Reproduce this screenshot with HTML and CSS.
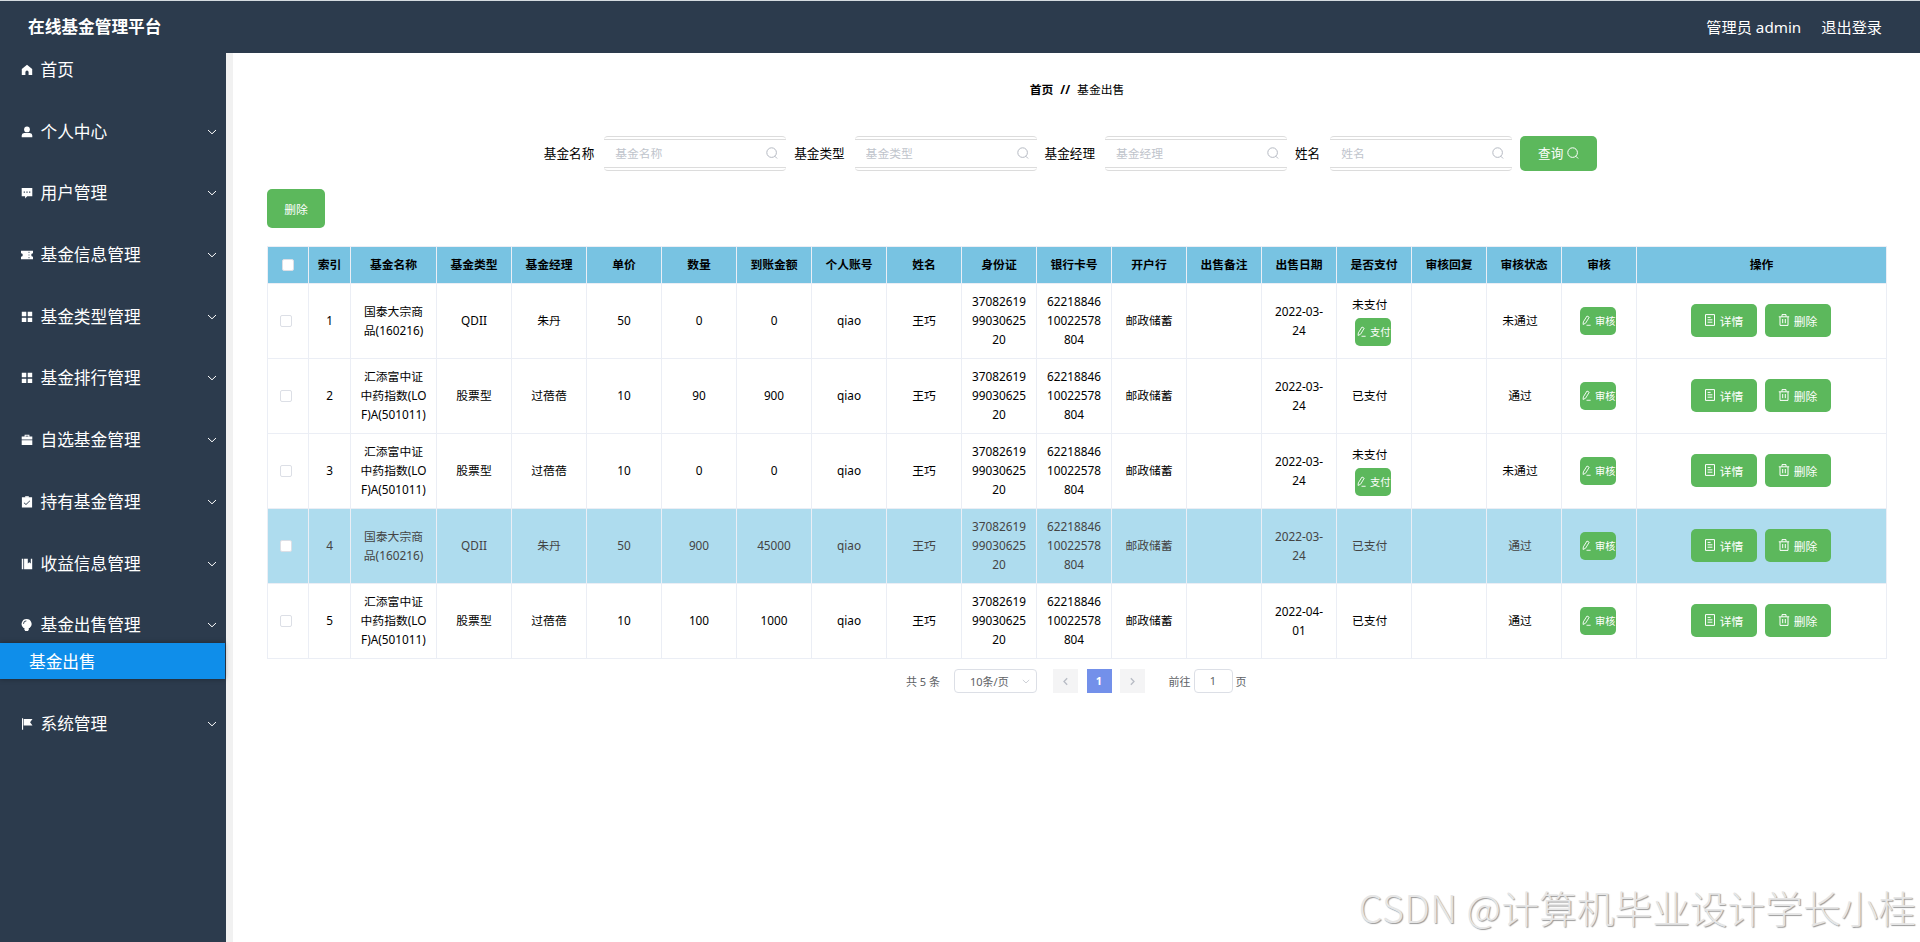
FILE: index.html
```html
<!DOCTYPE html>
<html lang="zh-CN">
<head>
    <meta charset="UTF-8">
    <meta name="viewport" content="width=device-width, initial-scale=1.0">
    <title>在线基金管理平台</title>
    <link rel="stylesheet" href="styles.css">
</head>
<body>

    <svg class="symbols">
        <symbol id="home" viewBox="0 0 12 12"><path d="M6 .8 11.2 5v6H7.6V8.2a1.6 1.6 0 0 0-3.2 0V11H.8V5z"/></symbol>
        <symbol id="user" viewBox="0 0 12 12"><circle cx="6" cy="3.4" r="2.9"/><path d="M.7 11.3V9.6A2.6 2.6 0 0 1 3.2 7h5.6a2.6 2.6 0 0 1 2.5 2.6v1.7z"/></symbol>
        <symbol id="chat" viewBox="0 0 12 12"><path fill-rule="evenodd" d="M.7 1h10.6v8.2H6.2L4.1 11.4V9.2H.7zM2.7 4.6v1.2h1.2V4.6zm2.7 0v1.2h1.2V4.6zm2.7 0v1.2h1.2V4.6z"/></symbol>
        <symbol id="ticket" viewBox="0 0 12 12"><path fill-rule="evenodd" d="M0 1.7h12v2.5a1.8 1.8 0 0 0 0 3.6v2.5H0V7.8a1.8 1.8 0 0 0 0-3.6zM7.6 2.8v1.1h.8V2.8zm0 2.6v1.2h.8V5.4zm0 2.7v1.1h.8V8.1z"/></symbol>
        <symbol id="grid" viewBox="0 0 12 12"><path d="M.8.8h4.5v4.4H.8zm5.9 0h4.5v4.4H6.7zM.8 6.7h4.5v4.4H.8zm5.9 0h4.5v4.4H6.7z"/></symbol>
        <symbol id="bag" viewBox="0 0 12 12"><path fill-rule="evenodd" d="M3.6 2.6V.8h4.8v1.8h2.9v2.9H.7V2.6zm1-.9v.9h2.8v-.9zM.7 6.3h10.6v4.6H.7z"/></symbol>
        <symbol id="claim" viewBox="0 0 12 12"><path fill-rule="evenodd" d="M.9 1.3h10.2v10.2H.9zM3.2 6.4l-.5.5 2.3 2.2 4.1-4-.4-.5L5 8.1z"/><path d="M4.2.2h3.6v1.6H4.2z"/></symbol>
        <symbol id="manage" viewBox="0 0 12 12"><path d="M.8.8h1.5v10.4H.8zm2.3 0h3.7v4.7l1.5-1.2 1.5 1.2V.8h1.4v10.4H3.1z"/></symbol>
        <symbol id="bulb" viewBox="0 0 12 12"><path fill-rule="evenodd" d="M5.6 0a5 5 0 0 1 3 9H2.6a5 5 0 0 1 3-9zM2.3 4.9h.7a2.7 2.7 0 0 1 2.4-2.7v-.7a3.3 3.3 0 0 0-3.1 3.4z"/><path d="M3.4 9h4.4v1.6L7 11.9H4.2l-.8-1.3z"/></symbol>
        <symbol id="flag" viewBox="0 0 12 12"><path d="M1 .3h1.1v11.5H1zM2.7 1h8.8L9.1 4.2l2.4 3.3H2.7z"/></symbol>
        <symbol id="down" viewBox="0 0 10 6"><path class="line" d="m1 1 4 3.8L9 1"/></symbol>
        <symbol id="left" viewBox="0 0 6 10"><path class="line bold" d="M5 1 1.2 5 5 9"/></symbol>
        <symbol id="right" viewBox="0 0 6 10"><path class="line bold" d="m1 1 3.8 4L1 9"/></symbol>
        <symbol id="search" viewBox="0 0 12 12"><circle class="line" cx="5.6" cy="5.6" r="4.8"/><path class="line" d="m8.8 9.2 2.3 2.3"/></symbol>
        <symbol id="edit" viewBox="0 0 10 12"><path class="line" d="M5.6 1 8 2.4 4 9 1.2 10.4 1.5 7.5zM5 11.3h4.6"/></symbol>
        <symbol id="doc" viewBox="0 0 12 12"><path class="line" d="M1.5 .6h9v10.8h-9zM3.6 3.4h3M3.6 5.8h4.8M3.6 8.2h4.8"/></symbol>
        <symbol id="trash" viewBox="0 0 12 12"><path class="line" d="M.8 2.8h10.4M4 2.6V.6h4v2M2 3v8.4h8V3M4.7 5v4.2M7.3 5v4.2"/></symbol>
    </svg>

    <header class="navbar">
        <div class="title">在线基金管理平台</div>
        <div class="right-menu">
            <span>管理员 admin</span>
            <span>退出登录</span>
        </div>
    </header>

    <div class="container">
        <aside class="sidebar">
            <ul class="menu">
                <li><div class="menu-title"><svg><use href="#home"/></svg><span>首页</span></div></li>
                <li><div class="menu-title"><svg><use href="#user"/></svg><span>个人中心</span><svg class="arrow"><use href="#down"/></svg></div></li>
                <li><div class="menu-title"><svg><use href="#chat"/></svg><span>用户管理</span><svg class="arrow"><use href="#down"/></svg></div></li>
                <li><div class="menu-title"><svg><use href="#ticket"/></svg><span>基金信息管理</span><svg class="arrow"><use href="#down"/></svg></div></li>
                <li><div class="menu-title"><svg><use href="#grid"/></svg><span>基金类型管理</span><svg class="arrow"><use href="#down"/></svg></div></li>
                <li><div class="menu-title"><svg><use href="#grid"/></svg><span>基金排行管理</span><svg class="arrow"><use href="#down"/></svg></div></li>
                <li><div class="menu-title"><svg><use href="#bag"/></svg><span>自选基金管理</span><svg class="arrow"><use href="#down"/></svg></div></li>
                <li><div class="menu-title"><svg><use href="#claim"/></svg><span>持有基金管理</span><svg class="arrow"><use href="#down"/></svg></div></li>
                <li><div class="menu-title"><svg><use href="#manage"/></svg><span>收益信息管理</span><svg class="arrow"><use href="#down"/></svg></div></li>
                <li>
                    <div class="menu-title"><svg><use href="#bulb"/></svg><span>基金出售管理</span><svg class="arrow"><use href="#down"/></svg></div>
                    <div class="submenu">基金出售</div>
                </li>
                <li><div class="menu-title"><svg><use href="#flag"/></svg><span>系统管理</span><svg class="arrow"><use href="#down"/></svg></div></li>
            </ul>
        </aside>

        <main class="main">
            <div class="breadcrumb"><b>首页</b><b>//</b><span>基金出售</span></div>

            <form class="search-form">
                <label>基金名称</label>
                <div class="field"><input type="text" placeholder="基金名称"><svg><use href="#search"/></svg></div>
                <label>基金类型</label>
                <div class="field"><input type="text" placeholder="基金类型"><svg><use href="#search"/></svg></div>
                <label>基金经理</label>
                <div class="field"><input type="text" placeholder="基金经理"><svg><use href="#search"/></svg></div>
                <label>姓名</label>
                <div class="field"><input type="text" placeholder="姓名"><svg><use href="#search"/></svg></div>
                <button type="button" class="btn btn-search">查询<svg><use href="#search"/></svg></button>
            </form>

            <button type="button" class="btn btn-delete">删除</button>

            <table class="table">
                <colgroup>
                    <col class="c-check"><col class="c-index"><col class="c-name">
                    <col span="16" class="c-cell">
                    <col class="c-action">
                </colgroup>
                <thead>
                    <tr>
                        <th><i class="checkbox"></i></th>
                        <th>索引</th><th>基金名称</th><th>基金类型</th><th>基金经理</th>
                        <th>单价</th><th>数量</th><th>到账金额</th><th>个人账号</th>
                        <th>姓名</th><th>身份证</th><th>银行卡号</th><th>开户行</th>
                        <th>出售备注</th><th>出售日期</th><th>是否支付</th><th>审核回复</th>
                        <th>审核状态</th><th>审核</th><th>操作</th>
                    </tr>
                </thead>
                <tbody>
                    <tr>
                        <td class="check"><i class="checkbox"></i></td>
                        <td>1</td><td>国泰大宗商<br>品(160216)</td><td>QDII</td><td>朱丹</td>
                        <td>50</td><td>0</td><td>0</td><td>qiao</td>
                        <td>王巧</td><td>37082619<br>99030625<br>20</td><td>62218846<br>10022578<br>804</td><td>邮政储蓄</td>
                        <td></td><td>2022-03-<br>24</td>
                        <td class="pay">未支付<button class="btn btn-mini"><svg><use href="#edit"/></svg>支付</button></td>
                        <td></td><td class="status">未通过</td>
                        <td class="audit"><button class="btn btn-mini"><svg><use href="#edit"/></svg>审核</button></td>
                        <td><div class="actions"><button class="btn"><svg><use href="#doc"/></svg>详情</button><button class="btn"><svg><use href="#trash"/></svg>删除</button></div></td>
                    </tr>
                    <tr>
                        <td class="check"><i class="checkbox"></i></td>
                        <td>2</td><td>汇添富中证<br>中药指数(LO<br>F)A(501011)</td><td>股票型</td><td>过蓓蓓</td>
                        <td>10</td><td>90</td><td>900</td><td>qiao</td>
                        <td>王巧</td><td>37082619<br>99030625<br>20</td><td>62218846<br>10022578<br>804</td><td>邮政储蓄</td>
                        <td></td><td>2022-03-<br>24</td>
                        <td class="pay">已支付</td>
                        <td></td><td class="status">通过</td>
                        <td class="audit"><button class="btn btn-mini"><svg><use href="#edit"/></svg>审核</button></td>
                        <td><div class="actions"><button class="btn"><svg><use href="#doc"/></svg>详情</button><button class="btn"><svg><use href="#trash"/></svg>删除</button></div></td>
                    </tr>
                    <tr>
                        <td class="check"><i class="checkbox"></i></td>
                        <td>3</td><td>汇添富中证<br>中药指数(LO<br>F)A(501011)</td><td>股票型</td><td>过蓓蓓</td>
                        <td>10</td><td>0</td><td>0</td><td>qiao</td>
                        <td>王巧</td><td>37082619<br>99030625<br>20</td><td>62218846<br>10022578<br>804</td><td>邮政储蓄</td>
                        <td></td><td>2022-03-<br>24</td>
                        <td class="pay">未支付<button class="btn btn-mini"><svg><use href="#edit"/></svg>支付</button></td>
                        <td></td><td class="status">未通过</td>
                        <td class="audit"><button class="btn btn-mini"><svg><use href="#edit"/></svg>审核</button></td>
                        <td><div class="actions"><button class="btn"><svg><use href="#doc"/></svg>详情</button><button class="btn"><svg><use href="#trash"/></svg>删除</button></div></td>
                    </tr>
                    <tr class="active">
                        <td class="check"><i class="checkbox"></i></td>
                        <td>4</td><td>国泰大宗商<br>品(160216)</td><td>QDII</td><td>朱丹</td>
                        <td>50</td><td>900</td><td>45000</td><td>qiao</td>
                        <td>王巧</td><td>37082619<br>99030625<br>20</td><td>62218846<br>10022578<br>804</td><td>邮政储蓄</td>
                        <td></td><td>2022-03-<br>24</td>
                        <td class="pay">已支付</td>
                        <td></td><td class="status">通过</td>
                        <td class="audit"><button class="btn btn-mini"><svg><use href="#edit"/></svg>审核</button></td>
                        <td><div class="actions"><button class="btn"><svg><use href="#doc"/></svg>详情</button><button class="btn"><svg><use href="#trash"/></svg>删除</button></div></td>
                    </tr>
                    <tr>
                        <td class="check"><i class="checkbox"></i></td>
                        <td>5</td><td>汇添富中证<br>中药指数(LO<br>F)A(501011)</td><td>股票型</td><td>过蓓蓓</td>
                        <td>10</td><td>100</td><td>1000</td><td>qiao</td>
                        <td>王巧</td><td>37082619<br>99030625<br>20</td><td>62218846<br>10022578<br>804</td><td>邮政储蓄</td>
                        <td></td><td>2022-04-<br>01</td>
                        <td class="pay">已支付</td>
                        <td></td><td class="status">通过</td>
                        <td class="audit"><button class="btn btn-mini"><svg><use href="#edit"/></svg>审核</button></td>
                        <td><div class="actions"><button class="btn"><svg><use href="#doc"/></svg>详情</button><button class="btn"><svg><use href="#trash"/></svg>删除</button></div></td>
                    </tr>
                </tbody>
            </table>

            <div class="pagination">
                <span class="total">共 5 条</span>
                <div class="sizes"><span>10条/页</span><svg><use href="#down"/></svg></div>
                <div class="page"><svg><use href="#left"/></svg></div>
                <div class="page current">1</div>
                <div class="page"><svg><use href="#right"/></svg></div>
                <div class="jump">前往<span class="jump-input">1</span>页</div>
            </div>
        </main>
    </div>

    <div class="watermark"><span>CSDN @</span>计算机毕业设计学长小桂</div>

</body>
</html>
```
FILE: styles.css
```css
* {
    box-sizing: border-box;
}
body {
    margin: 0;
    height: 942px;
    overflow: hidden;
    font-family: "Noto Sans", "Noto Sans CJK SC", sans-serif;
    font-size: 11.8px;
    color: #000;
    background: #fff;
}
button, input {
    font-family: inherit;
}
svg {
    width: 12px;
    height: 12px;
    flex: none;
    fill: currentColor;
}
.line {
    fill: none;
    stroke: currentColor;
    stroke-width: 1;
}
.line.bold {
    stroke-width: 1.6;
}
.symbols {
    display: none;
}

/* top bar */
.navbar {
    display: flex;
    justify-content: space-between;
    align-items: center;
    height: 53px;
    padding: 0 38px 2px 28px;
    border-top: 1px solid #d5dbe0;
    background: #2c3b4d;
    color: #fff;
}
.title {
    font-size: 16.7px;
    font-weight: bold;
}
.right-menu {
    display: flex;
    gap: 20px;
    padding-bottom: 1px;
    font-size: 15.2px;
}

.container {
    display: flex;
    height: 889px;
}

/* sidebar */
.sidebar {
    width: 233px;
    flex: none;
    border-right: 7px solid #f1f1f1;
    background: #2c3b4d;
    color: #fff;
}
.menu {
    margin: 0;
    padding: 0;
    list-style: none;
    font-size: 16.7px;
}
.menu li {
    padding-bottom: 27.7px;
}
.menu-title {
    display: flex;
    align-items: center;
    gap: 8px;
    height: 34px;
    padding: 0 9px 0 20.5px;
    line-height: 34px;
}
.menu-title .arrow {
    width: 10px;
    height: 6px;
    margin-left: auto;
}
.submenu {
    width: 225px;
    height: 36px;
    margin-top: 1px;
    padding-left: 29px;
    line-height: 37px;
    background: #0f8eea;
    box-shadow: 0 0 5px rgba(0, 0, 0, .35);
}

/* content */
.main {
    flex: 1;
    padding: 26px 33px 0 34px;
}
.breadcrumb {
    display: flex;
    justify-content: center;
    gap: 7px;
    height: 20px;
    line-height: 20px;
}
.search-form {
    display: flex;
    align-items: center;
    justify-content: center;
    height: 35px;
    margin-top: 37px;
    margin-left: -13px;
}
.search-form label {
    margin-right: 10px;
    padding-bottom: 2px;
    font-size: 12.6px;
}
.field {
    display: flex;
    align-items: center;
    width: 182px;
    height: 35px;
    margin-right: 8px;
    padding-right: 8px;
    padding-bottom: 1px;
    border: 1px solid #dcdcdc;
    border-width: 1px 0;
    border-radius: 4px;
    background: linear-gradient(#dcdcdc, #dcdcdc) 0 2px / 100% 1px no-repeat,
                linear-gradient(#dcdcdc, #dcdcdc) 0 30px / 100% 1px no-repeat;
    color: #b5b9c2;
}
.field input {
    width: 100%;
    padding: 0 0 0 11px;
    border: 0;
    outline: none;
    background: none;
    font-size: 11.8px;
}
.field input::placeholder {
    color: #c0c4cc;
}
.btn {
    display: inline-flex;
    align-items: center;
    justify-content: center;
    gap: 4px;
    width: 66px;
    height: 33px;
    padding: 0 0 1px;
    border: 0;
    border-radius: 5px;
    background: #5cb85c;
    color: #fff;
    font-size: 11.8px;
}
.btn-search {
    width: 77px;
    height: 35px;
    padding-bottom: 2px;
    font-size: 12.6px;
}
.btn-delete {
    display: flex;
    width: 58px;
    height: 39px;
    margin: 18px 0;
}
.btn-mini {
    display: flex;
    justify-content: flex-start;
    gap: 4px;
    width: 36px;
    height: 28px;
    margin: 0 auto;
    padding-left: 2px;
    overflow: hidden;
    font-size: 10.2px;
    white-space: nowrap;
}
.btn-mini svg {
    width: 9px;
    height: 11px;
}

/* table */
.table {
    width: 1620px;
    table-layout: fixed;
    border-collapse: collapse;
    text-align: center;
    line-height: 19px;
}
.c-check { width: 41px; }
.c-index { width: 42px; }
.c-name { width: 86px; }
.c-cell { width: 75px; }
.c-action { width: 250px; }
.table th, .table td {
    padding: 0 0 1px;
    border: 1px solid #ebeef5;
    white-space: nowrap;
}
.table th {
    height: 37px;
    background: #78c3e2;
}
.table td {
    height: 75px;
}
.table .active td {
    background: #aedcee;
    color: #444;
}
.checkbox {
    display: block;
    width: 12px;
    height: 12px;
    margin: 0 auto;
    border: 1px solid #dcdfe6;
    border-radius: 2px;
    background: #fff;
}
.table .check {
    padding: 0 4px 0 0;
}
.table .pay {
    padding-left: 15px;
    text-align: left;
}
.pay .btn-mini {
    margin: 4px 0 0 3px;
}
.table .status {
    padding-right: 8px;
}
.table .audit {
    padding: 0 2px 0 0;
}
.actions {
    display: flex;
    justify-content: center;
    gap: 8px;
    padding-right: 2px;
}

/* pagination */
.pagination {
    display: flex;
    align-items: center;
    height: 24px;
    margin-top: 10px;
    padding-left: 639px;
    color: #606266;
    font-size: 11px;
}
.total {
    width: 48px;
    padding-bottom: 1px;
}
.sizes {
    display: flex;
    align-items: center;
    justify-content: space-between;
    width: 83px;
    height: 24px;
    margin-right: 16px;
    padding: 0 6px 0 15px;
    border: 1px solid #dcdfe6;
    border-radius: 4px;
}
.sizes svg {
    width: 8px;
    height: 5px;
    color: #c0c4cc;
}
.page {
    display: flex;
    align-items: center;
    justify-content: center;
    width: 25px;
    height: 24px;
    margin-right: 8.5px;
    background: #f4f4f5;
    color: #b8bcc5;
}
.page svg {
    width: 5px;
    height: 9px;
}
.page.current {
    padding-bottom: 1px;
    background: #7390ea;
    color: #fff;
    font-weight: bold;
}
.jump {
    display: flex;
    align-items: center;
    gap: 3px;
    margin-left: 15px;
}
.jump-input {
    width: 39px;
    height: 24px;
    border: 1px solid #dcdfe6;
    border-radius: 4px;
    line-height: 22px;
    text-align: center;
}

.watermark {
    position: absolute;
    right: 4px;
    bottom: 7px;
    color: #e6e6e6;
    font-family: "Noto Sans CJK SC", sans-serif;
    font-size: 37.7px;
    font-weight: 300;
    line-height: 56px;
    text-shadow: 1px 1px 1px #999;
    white-space: nowrap;
}
.watermark span {
    letter-spacing: .6px;
}
```
